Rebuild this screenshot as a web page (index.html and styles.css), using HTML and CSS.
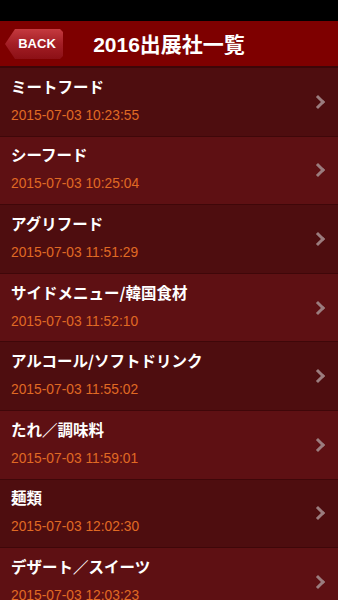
FILE: index.html
```html
<!DOCTYPE html>
<html lang="ja">
<head>
    <meta charset="UTF-8">
    <meta name="viewport" content="width=device-width, initial-scale=1.0">
    <title>2016出展社一覧</title>
    <link rel="stylesheet" href="styles.css">
</head>
<body>

<div class="status-bar"></div>

<div class="nav-bar">
    <a class="back-btn" href="#">BACK</a>
    <h1>2016出展社一覧</h1>
</div>

<ul class="list">
    <li class="row">
        <div class="row-text">
            <div class="row-title">ミートフード</div>
            <div class="row-date">2015-07-03 10:23:55</div>
        </div>
        <span class="chevron"></span>
    </li>
    <li class="row">
        <div class="row-text">
            <div class="row-title">シーフード</div>
            <div class="row-date">2015-07-03 10:25:04</div>
        </div>
        <span class="chevron"></span>
    </li>
    <li class="row">
        <div class="row-text">
            <div class="row-title">アグリフード</div>
            <div class="row-date">2015-07-03 11:51:29</div>
        </div>
        <span class="chevron"></span>
    </li>
    <li class="row">
        <div class="row-text">
            <div class="row-title">サイドメニュー/韓国食材</div>
            <div class="row-date">2015-07-03 11:52:10</div>
        </div>
        <span class="chevron"></span>
    </li>
    <li class="row">
        <div class="row-text">
            <div class="row-title">アルコール/ソフトドリンク</div>
            <div class="row-date">2015-07-03 11:55:02</div>
        </div>
        <span class="chevron"></span>
    </li>
    <li class="row">
        <div class="row-text">
            <div class="row-title">たれ／調味料</div>
            <div class="row-date">2015-07-03 11:59:01</div>
        </div>
        <span class="chevron"></span>
    </li>
    <li class="row">
        <div class="row-text">
            <div class="row-title">麺類</div>
            <div class="row-date">2015-07-03 12:02:30</div>
        </div>
        <span class="chevron"></span>
    </li>
    <li class="row">
        <div class="row-text">
            <div class="row-title">デザート／スイーツ</div>
            <div class="row-date">2015-07-03 12:03:23</div>
        </div>
        <span class="chevron"></span>
    </li>
</ul>

</body>
</html>
```

FILE: styles.css
```css
body {
    margin: 0;
    background: #000;
    font-family: "Liberation Sans", "Noto Sans CJK JP", sans-serif;
    overflow: hidden;
}
.status-bar {
    height: 21px;
    background: #000;
}
.nav-bar {
    height: 45px;
    background: #7e0000;
    border-bottom: 2px solid #3d0608;
    display: flex;
    align-items: center;
    position: relative;
}
.nav-bar h1 {
    flex: 1;
    margin: 0 0 2px;
    text-align: center;
    color: #fff;
    font-size: 21px;
    font-weight: bold;
}
.back-btn {
    position: absolute;
    left: 5px;
    top: 8px;
    height: 30px;
    width: 58px;
    line-height: 30px;
    text-align: center;
    padding-left: 6px;
    box-sizing: border-box;
    color: #fff;
    font-size: 13px;
    font-weight: bold;
    text-decoration: none;
    background: linear-gradient(#c53a3f, #a31e25 50%, #8c1016);
    clip-path: polygon(10px 0, calc(100% - 3px) 0, 100% 3px, 100% calc(100% - 3px), calc(100% - 3px) 100%, 10px 100%, 0 50%);
}
.list {
    list-style: none;
    margin: 0;
    padding: 0;
}
.row {
    height: 67.6px;
    border-bottom: 1px solid #3f0709;
    background: #4e0d0f;
    display: flex;
    align-items: center;
    padding: 0 12px 0 11px;
}
.row:nth-child(even) {
    background: #5e1013;
}
.row-text {
    flex: 1;
}
.row-title {
    color: #fff;
    font-size: 15.5px;
    font-weight: bold;
    font-family: "Noto Sans CJK JP", sans-serif;
    line-height: 20px;
    margin-top: -5px;
}
.row-date {
    color: #e06a24;
    font-size: 13.8px;
    margin-top: 12px;
}
.chevron {
    width: 7px;
    height: 7px;
    border-right: 3px solid #9b7c7e;
    border-top: 3px solid #9b7c7e;
    transform: rotate(45deg);
    margin-right: 3px;
}
```
